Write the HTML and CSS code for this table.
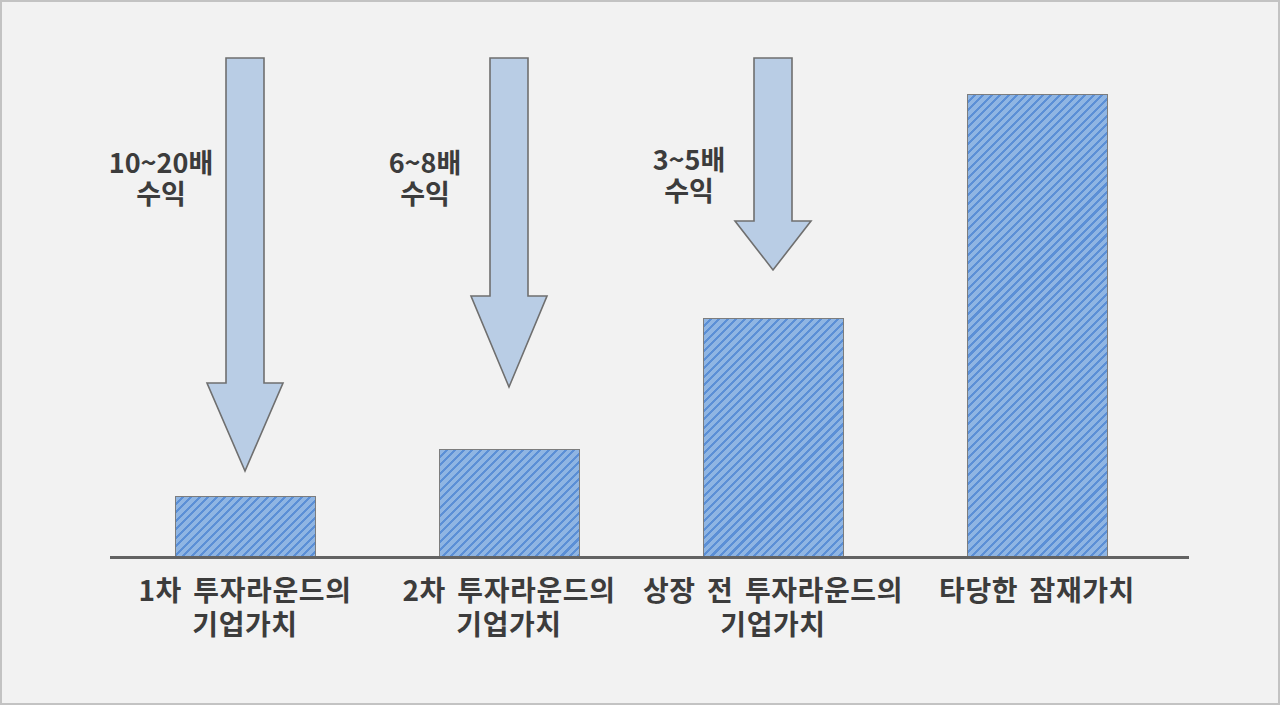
FILE: index.html
```html
<!DOCTYPE html>
<html lang="ko">
<head>
<meta charset="utf-8">
<link rel="stylesheet" href="styles.css">
</head>
<body>
<div class="frame">
  <div class="chart">
    <div class="plot">
      <div class="col">
        <div class="caption"><div>10~20배</div><div>수익</div></div>
        <svg class="arrow" width="80" height="413" viewBox="0 0 80 413"><polygon points="21,0 59,0 59,325 78,325 40,413 2,325 21,325"/></svg>
        <div class="bar" style="height:60px"></div>
      </div>
      <div class="col">
        <div class="caption"><div>6~8배</div><div>수익</div></div>
        <svg class="arrow" width="80" height="329" viewBox="0 0 80 329"><polygon points="21,0 59,0 59,238 78,238 40,329 2,238 21,238"/></svg>
        <div class="bar" style="height:107px"></div>
      </div>
      <div class="col">
        <div class="caption c3"><div>3~5배</div><div>수익</div></div>
        <svg class="arrow" width="80" height="212" viewBox="0 0 80 212"><polygon points="21,0 59,0 59,163 78,163 40,212 2,163 21,163"/></svg>
        <div class="bar" style="height:238px"></div>
      </div>
      <div class="col">
        <div class="bar" style="height:462px"></div>
      </div>
    </div>
    <div class="axis"></div>
    <div class="labels">
      <div class="label"><div>1차 투자라운드의</div><div>기업가치</div></div>
      <div class="label"><div>2차 투자라운드의</div><div>기업가치</div></div>
      <div class="label"><div>상장 전 투자라운드의</div><div>기업가치</div></div>
      <div class="label"><div>타당한 잠재가치</div></div>
    </div>
  </div>
</div>
</body>
</html>
```

FILE: styles.css
```css
html, body {
  margin: 0;
  padding: 0;
}
body {
  width: 1280px;
  height: 705px;
  overflow: hidden;
  background: #f2f2f2;
  font-family: "Noto Sans CJK KR", "Noto Sans", sans-serif;
}
.frame {
  box-sizing: border-box;
  width: 1280px;
  height: 705px;
  border: 2px solid #c3c3c3;
  background: #f2f2f2;
}
.chart {
  margin-left: 108px;
  width: 1079px;
}
.plot {
  display: flex;
  height: 554px;
  padding-left: 3px;
}
.col {
  position: relative;
  width: 264px;
  display: flex;
  flex-direction: column;
  align-items: center;
}
.arrow {
  margin-top: 56px;
  overflow: visible;
  flex: none;
}
.arrow polygon {
  fill: #b9cde5;
  stroke: #6f6f6f;
  stroke-width: 1.6;
  stroke-linejoin: miter;
}
.bar {
  margin-top: auto;
  box-sizing: border-box;
  width: 141px;
  border: 1px solid #7d7d7d;
  border-bottom: none;
  background: repeating-linear-gradient(135deg, #8fb5e3 0px, #8fb5e3 3.8px, #5b8fd6 3.8px, #5b8fd6 6px);
}
.caption {
  position: absolute;
  top: 144px;
  left: -22px;
  width: 140px;
  text-align: center;
  white-space: nowrap;
  font-size: 27px;
  font-weight: bold;
  line-height: 31px;
  color: #3c3c3c;
}
.caption.c3 {
  top: 141px;
}
.axis {
  height: 3px;
  background: #636363;
}
.labels {
  display: flex;
  padding-left: 3px;
  margin-top: 13px;
}
.label {
  width: 264px;
  flex: none;
  text-align: center;
  white-space: nowrap;
  font-size: 28px;
  font-weight: bold;
  line-height: 34px;
  letter-spacing: 0.6px;
  word-spacing: 3px;
  color: #3c3c3c;
}
```
